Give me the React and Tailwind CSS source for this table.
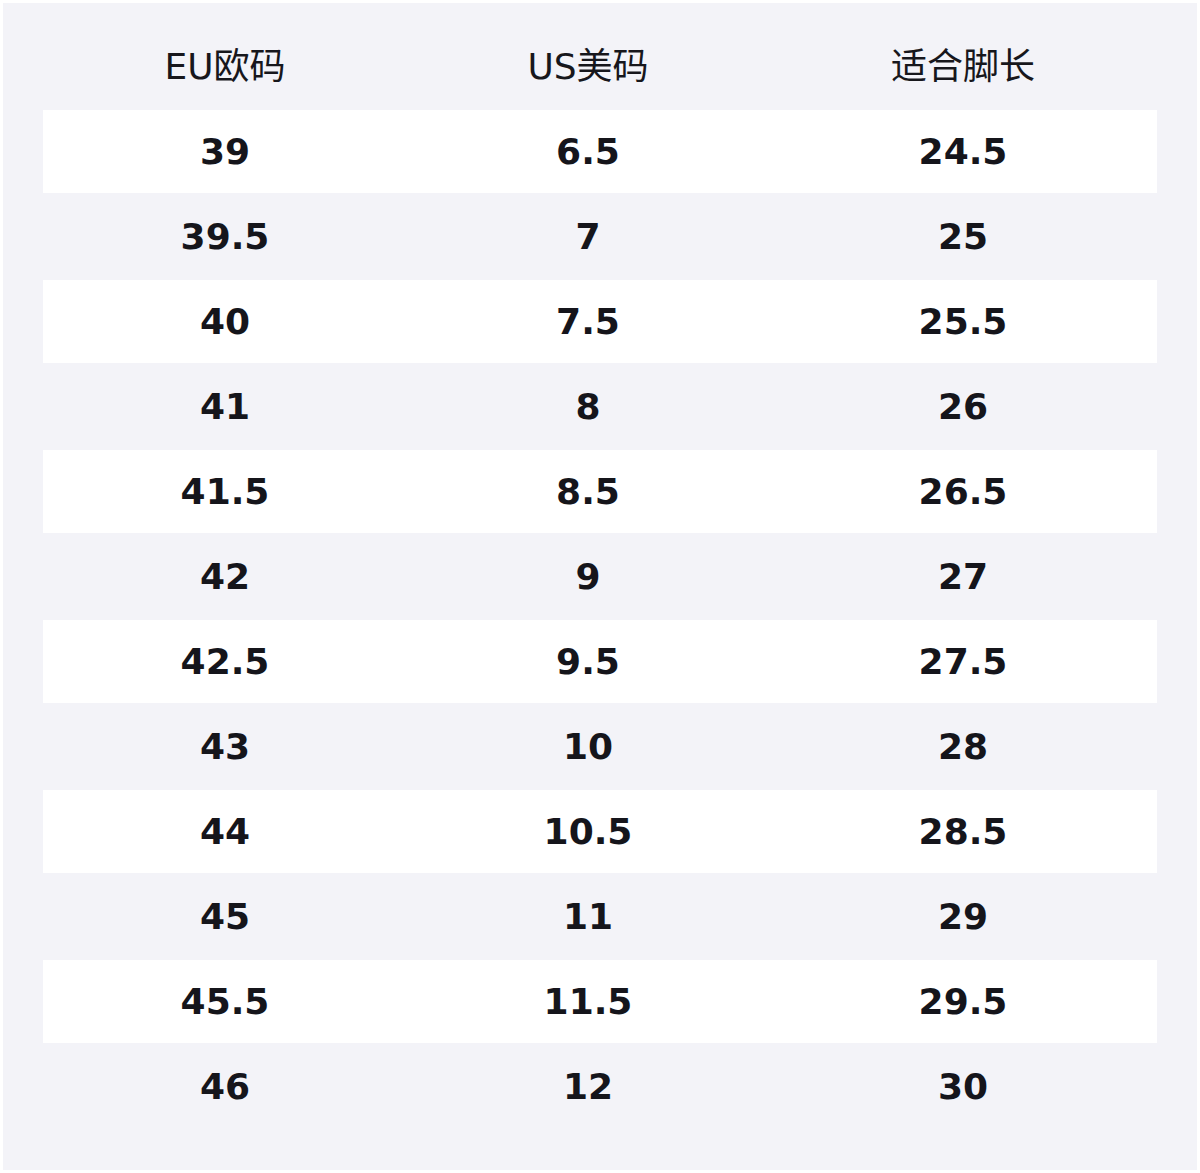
const rows = [
  ["39", "6.5", "24.5"],
  ["39.5", "7", "25"],
  ["40", "7.5", "25.5"],
  ["41", "8", "26"],
  ["41.5", "8.5", "26.5"],
  ["42", "9", "27"],
  ["42.5", "9.5", "27.5"],
  ["43", "10", "28"],
  ["44", "10.5", "28.5"],
  ["45", "11", "29"],
  ["45.5", "11.5", "29.5"],
  ["46", "12", "30"],
];

const cols = "grid grid-cols-[364px_362px_388px]";

export default function App() {
  return (
    <div
      className="bg-white p-[3px]"
      style={{ fontFamily: '"DejaVu Sans", "Noto Sans CJK SC", sans-serif' }}
    >
      <div className="bg-[#f3f3f8] h-[1167px] px-[40px] pt-[40px]">
        <div className={`${cols} h-[48px] mb-[19px] items-center text-[36px] leading-none text-[#17171c]`}>
          <div className="text-center">EU欧码</div>
          <div className="text-center">US美码</div>
          <div className="text-center">适合脚长</div>
        </div>

        <div className="flex flex-col gap-[2px]">
          {rows.map((r, i) => (
            <div
              key={i}
              className={`${cols} h-[83px] items-center text-[36px] leading-none font-bold text-[#15151b] ${
                i % 2 === 0 ? "bg-white" : ""
              }`}
            >
              {r.map((v, j) => (
                <div key={j} className="text-center">{v}</div>
              ))}
            </div>
          ))}
        </div>
      </div>
    </div>
  );
}
